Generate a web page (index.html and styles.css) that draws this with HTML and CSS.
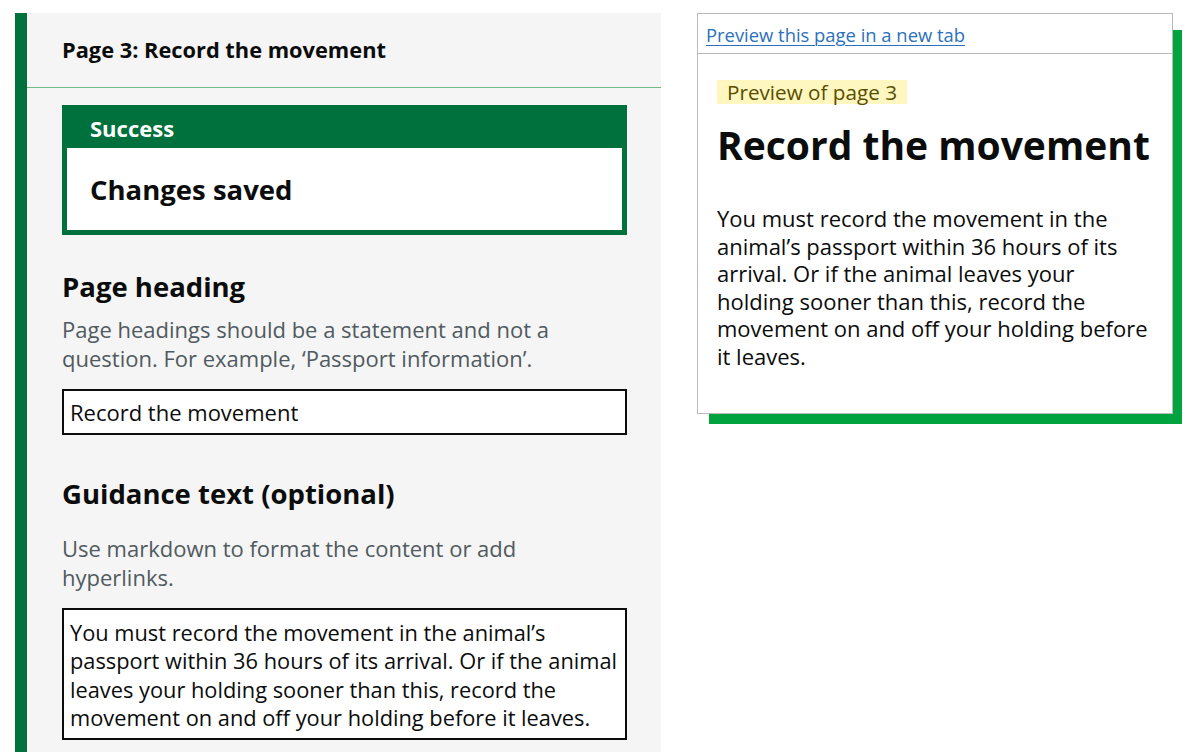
FILE: index.html
```html
<!DOCTYPE html>
<html lang="en">
<head>
<meta charset="utf-8">
<title>Page 3: Record the movement</title>
<link rel="stylesheet" href="styles.css">
</head>
<body>
<div class="layout">
  <section class="editor">
    <header class="editor-header">
      <h2 class="editor-title">Page 3: Record the movement</h2>
    </header>
    <div class="editor-body">
      <div class="banner" role="alert">
        <div class="banner-title">Success</div>
        <div class="banner-content">
          <p class="banner-heading">Changes saved</p>
        </div>
      </div>

      <div class="field field-first">
        <label class="label" for="heading">Page heading</label>
        <div class="hint">Page headings should be a statement and not a question. For example, ‘Passport information’.</div>
        <input class="input" id="heading" type="text" value="Record the movement">
      </div>

      <div class="field field-second">
        <label class="label" for="guidance">Guidance text (optional)</label>
        <div class="hint hint-spaced">Use markdown to format the content or add hyperlinks.</div>
        <textarea class="textarea" id="guidance">You must record the movement in the animal’s passport within 36 hours of its arrival. Or if the animal leaves your holding sooner than this, record the movement on and off your holding before it leaves.</textarea>
      </div>
    </div>
  </section>

  <aside class="preview">
    <div class="preview-card">
      <div class="preview-bar">
        <a class="preview-link" href="#">Preview this page in a new tab</a>
      </div>
      <div class="preview-body">
        <span class="tag">Preview of page 3</span>
        <h1 class="preview-heading">Record the movement</h1>
        <p class="preview-text">You must record the movement in the animal’s passport within 36 hours of its arrival. Or if the animal leaves your holding sooner than this, record the movement on and off your holding before it leaves.</p>
      </div>
    </div>
  </aside>
</div>
</body>
</html>
```

FILE: styles.css
```css
* {
  box-sizing: border-box;
}

html, body {
  margin: 0;
  padding: 0;
  background: #ffffff;
  height: 100%;
  overflow: hidden;
}

body {
  font-family: "Open Sans", "Noto Sans", Arial, sans-serif;
  color: #0b0c0c;
  padding: 13px 8px 0 15px;
}

.layout {
  display: flex;
  align-items: flex-start;
  gap: 36px;
  height: 100%;
}

/* Editor column */
.editor {
  width: 646px;
  flex: 0 0 646px;
  min-height: 760px;
  background: #f5f5f5;
  border-left: 12px solid #00703c;
}

.editor-header {
  height: 75px;
  display: flex;
  align-items: center;
  padding: 0 35px;
  border-bottom: 1px solid #6fbb8c;
}

.editor-title {
  margin: 0;
  font-size: 21.8px;
  font-weight: 700;
  line-height: 28px;
}

.editor-body {
  padding: 17px 34px 0 35px;
}

/* Notification banner */
.banner {
  border: 5px solid #00703c;
  background: #00703c;
}

.banner-title {
  color: #ffffff;
  font-size: 22px;
  font-weight: 700;
  line-height: 28px;
  padding: 4px 23px 6px 23px;
}

.banner-content {
  background: #ffffff;
  padding: 26px 23px 24px 23px;
}

.banner-heading {
  margin: 0;
  font-size: 27.5px;
  font-weight: 700;
  line-height: 32px;
}

/* Form fields */
.field {
  display: flex;
  flex-direction: column;
}

.field-first {
  margin-top: 36px;
}

.field-second {
  margin-top: 43px;
}

.label {
  font-size: 27.5px;
  font-weight: 700;
  line-height: 32px;
  margin-bottom: 12px;
}

.hint {
  color: #505a5f;
  font-size: 22px;
  line-height: 29px;
  margin-bottom: 16px;
}

.hint-spaced {
  margin-top: 12px;
}

.input {
  width: 565px;
  height: 46px;
  border: 2px solid #0b0c0c;
  border-radius: 0;
  background: #ffffff;
  padding: 0 6px;
  font-family: inherit;
  font-size: 22px;
  color: #0b0c0c;
  margin: 0;
}

.textarea {
  width: 565px;
  height: 132px;
  border: 2px solid #0b0c0c;
  border-radius: 0;
  background: #ffffff;
  padding: 9px 0 6px 6px;
  font-family: inherit;
  font-size: 21.8px;
  line-height: 28.4px;
  color: #0b0c0c;
  resize: none;
  overflow: hidden;
  margin: 0;
}

/* Preview column */
.preview {
  position: relative;
  z-index: 0;
  width: 485px;
  flex: 0 0 485px;
}

.preview-card {
  position: relative;
  width: 476px;
  height: 401px;
  background: #ffffff;
  border: 1px solid #b8babc;
}

.preview-card::before {
  content: "";
  position: absolute;
  top: 16px;
  left: 11px;
  right: -10px;
  bottom: -11px;
  background: #00a33e;
  z-index: -1;
}

.preview-bar {
  height: 40px;
  border-bottom: 1px solid #b8babc;
  padding: 0 8px;
  display: flex;
  align-items: center;
}

.preview-link {
  color: #2b70be;
  font-size: 18.4px;
  line-height: 24px;
  text-decoration: underline;
  text-underline-offset: 3px;
  text-decoration-thickness: 1px;
  padding-top: 2px;
}

.preview-body {
  padding: 26px 19px 0 19px;
}

.tag {
  display: inline-block;
  background: #fff7bf;
  color: #594d00;
  font-size: 20.7px;
  line-height: 24px;
  padding: 0 10px;
}

.preview-heading {
  margin: 16px 0 0 0;
  font-size: 39px;
  font-weight: 700;
  line-height: 48px;
}

.preview-text {
  margin: 36px 0 0 0;
  font-size: 22px;
  line-height: 27.6px;
}
```
